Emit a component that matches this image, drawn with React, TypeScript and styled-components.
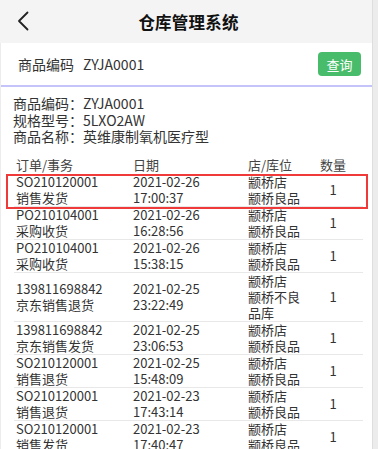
import styled, { createGlobalStyle } from 'styled-components';

const GlobalStyle = createGlobalStyle`
  html, body {
    margin: 0;
    padding: 0;
    overflow: hidden;
    background: #ffffff;
  }
  body {
    font-family: "Noto Sans CJK SC", "Noto Sans", sans-serif;
    color: #333;
  }
`;

const Page = styled.div`
  display: flex;
  width: 100%;
  height: 449px;
  overflow: hidden;
`;

const Main = styled.div`
  flex: 1;
  display: flex;
  flex-direction: column;
  min-width: 0;
`;

const ScrollTrack = styled.div`
  width: 5px;
  flex-shrink: 0;
  background: #ececec;
  border-left: 1px solid #dedede;
`;

const Header = styled.div`
  height: 43px;
  flex-shrink: 0;
  background: #f4f4f4;
  display: flex;
  align-items: center;
  justify-content: center;
  position: relative;
  padding-left: 5px;
`;

const BackButton = styled.button`
  position: absolute;
  left: 14px;
  top: 9px;
  width: 18px;
  height: 24px;
  padding: 0;
  border: 0;
  background: none;
  display: flex;
  align-items: center;
  justify-content: center;
`;

const Title = styled.div`
  font-size: 16.5px;
  font-weight: 700;
  color: #111;
  letter-spacing: 0.2px;
`;

const Body = styled.div`
  flex: 1 0 auto;
  border-left: 1px solid #ececec;
`;

const SearchRow = styled.div`
  height: 42px;
  display: flex;
  align-items: center;
  padding: 0 11px 0 17px;
  border-bottom: 2px solid #c4c4fb;
  font-size: 14px;
  color: #333;
`;

const SearchLabel = styled.span`
  margin-right: 9px;
`;

const SearchValue = styled.span`
  flex: 1;
`;

const QueryButton = styled.button`
  width: 43px;
  height: 24px;
  border: 0;
  border-radius: 4px;
  background: #49bc6b;
  color: #fff;
  font-family: inherit;
  font-size: 13px;
  padding: 0;
`;

const Info = styled.div`
  padding: 8px 12px 0;
  font-size: 14px;
  line-height: 16.5px;
  color: #333;
`;

const Table = styled.div`
  margin: 12px 9px 0 13px;
  font-size: 13px;
  line-height: 16px;
  color: #333;
`;

const Row = styled.div<{ $selected?: boolean; $head?: boolean }>`
  display: grid;
  grid-template-columns: 117px 115px 62px 50px;
  align-items: center;
  position: relative;
  padding-bottom: ${(p) => (p.$head ? '1px' : '0')};
  border-bottom: ${(p) => (p.$head ? '0' : '1px solid #e8e8e8')};
  color: ${(p) => (p.$head ? '#444' : '#333')};

  ${(p) =>
    p.$selected &&
    `
    &::after {
      content: '';
      position: absolute;
      left: -8px;
      right: -5px;
      top: 0;
      bottom: -3px;
      border: 2px solid #f03a3a;
      pointer-events: none;
    }
  `}
`;

const Cell = styled.div<{ $center?: boolean }>`
  padding-left: ${(p) => (p.$center ? '0' : '2px')};
  text-align: ${(p) => (p.$center ? 'center' : 'left')};
`;

interface Record {
  order: string;
  kind: string;
  date: string;
  time: string;
  store: string;
  place: string;
  qty: number;
}

const records: Record[] = [
  { order: 'SO210120001', kind: '销售发货', date: '2021-02-26', time: '17:00:37', store: '颛桥店', place: '颛桥良品', qty: 1 },
  { order: 'PO210104001', kind: '采购收货', date: '2021-02-26', time: '16:28:56', store: '颛桥店', place: '颛桥良品', qty: 1 },
  { order: 'PO210104001', kind: '采购收货', date: '2021-02-26', time: '15:38:15', store: '颛桥店', place: '颛桥良品', qty: 1 },
  { order: '139811698842', kind: '京东销售退货', date: '2021-02-25', time: '23:22:49', store: '颛桥店', place: '颛桥不良品库', qty: 1 },
  { order: '139811698842', kind: '京东销售发货', date: '2021-02-25', time: '23:06:53', store: '颛桥店', place: '颛桥良品', qty: 1 },
  { order: 'SO210120001', kind: '销售退货', date: '2021-02-25', time: '15:48:09', store: '颛桥店', place: '颛桥良品', qty: 1 },
  { order: 'SO210120001', kind: '销售退货', date: '2021-02-23', time: '17:43:14', store: '颛桥店', place: '颛桥良品', qty: 1 },
  { order: 'SO210120001', kind: '销售发货', date: '2021-02-23', time: '17:40:47', store: '颛桥店', place: '颛桥良品', qty: 1 },
];

function App() {
  return (
    <Page>
      <GlobalStyle />
      <Main>
        <Header>
          <BackButton aria-label="返回">
            <svg width="12" height="20" viewBox="0 0 12 20" fill="none">
              <polyline points="10.5,1.5 2,10 10.5,18.5" stroke="#222" strokeWidth="1.8" strokeLinecap="round" strokeLinejoin="round" />
            </svg>
          </BackButton>
          <Title>仓库管理系统</Title>
        </Header>
        <Body>
          <SearchRow>
            <SearchLabel>商品编码</SearchLabel>
            <SearchValue>ZYJA0001</SearchValue>
            <QueryButton>查询</QueryButton>
          </SearchRow>
          <Info>
            <div>商品编码：ZYJA0001</div>
            <div>规格型号：5LXO2AW</div>
            <div>商品名称：英维康制氧机医疗型</div>
          </Info>
          <Table>
            <Row $head>
              <Cell>订单/事务</Cell>
              <Cell>日期</Cell>
              <Cell>店/库位</Cell>
              <Cell $center>数量</Cell>
            </Row>
            {records.map((r, i) => (
              <Row key={i} $selected={i === 0}>
                <Cell>
                  {r.order}
                  <br />
                  {r.kind}
                </Cell>
                <Cell>
                  {r.date}
                  <br />
                  {r.time}
                </Cell>
                <Cell>
                  {r.store}
                  <br />
                  {r.place}
                </Cell>
                <Cell $center>{r.qty}</Cell>
              </Row>
            ))}
          </Table>
        </Body>
      </Main>
      <ScrollTrack />
    </Page>
  );
}

export default App;
